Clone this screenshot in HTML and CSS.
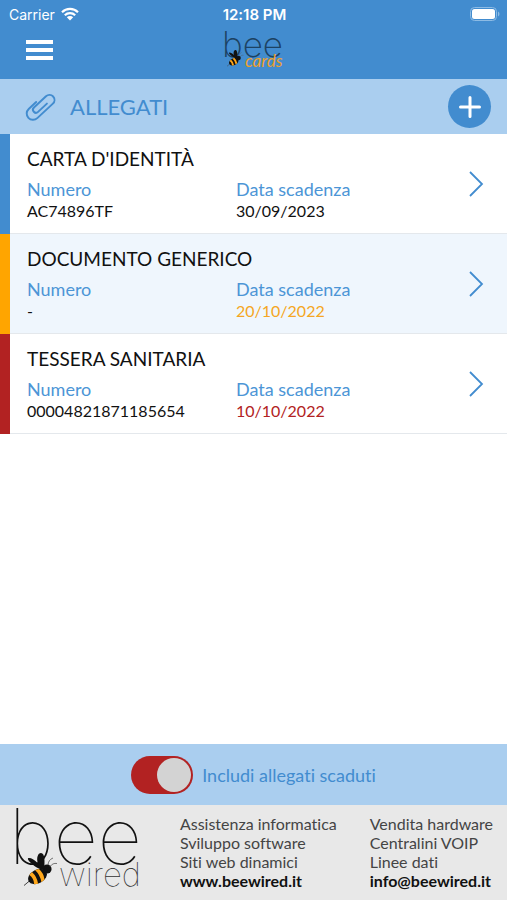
FILE: index.html
```html
<!DOCTYPE html>
<html lang="it">
<head>
  <meta charset="UTF-8">
  <meta name="viewport" content="width=device-width, initial-scale=1.0">
  <title>Bee Cards - Allegati</title>
  <link rel="stylesheet" href="styles.css">
</head>
<body>
  <svg class="symbols" aria-hidden="true">
    <symbol id="bee" viewBox="0 0 34 34">
      <path d="M0 32.500l6-5" stroke="#444" stroke-width="1"/>
      <g transform="translate(13.500 23.500) rotate(-28)">
        <ellipse rx="10" ry="6.800" fill="#111"/>
        <path d="M-6.500-5.200Q-4 0-6.500 5.200L-2.800 6.600Q-.5 0-2.800-6.600z" fill="#ffa71a"/>
        <path d="M.8-6.800Q3 0 .8 6.800L4.800 5.900Q7 0 4.800-5.900z" fill="#ffa71a"/>
      </g>
      <circle cx="23" cy="16" r="4.600" fill="#111"/>
      <path d="M20 17C13 16 6 10 4 6.500c-1-3 6-1 10 4C12 5 14 0 17 0c4 0 4 9 3 17z" fill="#111"/>
      <path d="M24 12c0-3 2-6 5-7M26 13.500c2-2.500 4-3.500 7-3" fill="none" stroke="#555" stroke-width=".8"/>
    </symbol>
    <symbol id="chevron" viewBox="0 0 16 26">
      <path d="M2 1L14 13 2 25" fill="none" stroke="#428ccf" stroke-width="1.800"/>
    </symbol>
  </svg>

  <div id="app">
    <header class="header">
      <div class="status-bar">
        <span class="carrier">Carrier
          <svg class="wifi" viewBox="0 0 18 14" aria-hidden="true">
            <path d="M1 5.200a11.500 11.500 0 0 1 16 0M3.800 8.200a7.500 7.500 0 0 1 10.400 0" fill="none" stroke="#fff" stroke-width="2.200"/>
            <path d="M5.800 10.300a4.600 4.600 0 0 1 6.400 0L9 13.600z" fill="#fff"/>
          </svg>
        </span>
        <strong class="clock">12:18 PM</strong>
        <svg class="battery" viewBox="0 0 30 14" aria-hidden="true">
          <rect x=".5" y=".5" width="26" height="13" rx="4" fill="none" stroke="#8dbbe4"/>
          <rect x="2" y="2" width="23" height="10" rx="2.500" fill="#fff"/>
          <path d="M28 4.500c2 1 2 4 0 5z" fill="#8dbbe4"/>
        </svg>
      </div>
      <div class="nav">
        <button class="menu-btn" aria-label="Menu"><span></span><span></span><span></span></button>
        <svg class="logo-cards" viewBox="0 0 64 42" role="img" aria-label="bee cards">
          <text x="0" y="27" class="logo-cards-bee">bee</text>
          <text x="23" y="37" class="logo-cards-name">cards</text>
          <use href="#bee" x="5" y="20" width="17" height="17"/>
        </svg>
      </div>
    </header>

    <div class="title-bar">
      <svg class="clip" viewBox="0 0 32 30" aria-hidden="true">
        <path transform="translate(15.500 15) rotate(-43) translate(-16.400 -6.500)" d="M17 0H6.500a6.500 6.500 0 0 0 0 13H28.500a5.200 5.200 0 0 0 0-10.400H11.500a3.100 3.100 0 0 0 0 6.200H24" fill="none" stroke="#428ccf" stroke-width="2" stroke-linecap="round"/>
      </svg>
      <h1>ALLEGATI</h1>
      <button class="add-btn" aria-label="Aggiungi">
        <svg viewBox="0 0 22 22" aria-hidden="true"><path d="M11 1.500v19M1.500 11h19" stroke="#fff" stroke-width="3" stroke-linecap="round"/></svg>
      </button>
    </div>

    <main>
      <ul class="documents">
        <li class="document valid">
          <h2>CARTA D'IDENTITÀ</h2>
          <dl>
            <div><dt>Numero</dt><dd>AC74896TF</dd></div>
            <div><dt>Data scadenza</dt><dd class="date">30/09/2023</dd></div>
          </dl>
          <button class="open-btn" aria-label="Apri carta d'identità"><svg><use href="#chevron"/></svg></button>
        </li>
        <li class="document expiring">
          <h2>DOCUMENTO GENERICO</h2>
          <dl>
            <div><dt>Numero</dt><dd>-</dd></div>
            <div><dt>Data scadenza</dt><dd class="date">20/10/2022</dd></div>
          </dl>
          <button class="open-btn" aria-label="Apri documento generico"><svg><use href="#chevron"/></svg></button>
        </li>
        <li class="document expired">
          <h2>TESSERA SANITARIA</h2>
          <dl>
            <div><dt>Numero</dt><dd>00004821871185654</dd></div>
            <div><dt>Data scadenza</dt><dd class="date">10/10/2022</dd></div>
          </dl>
          <button class="open-btn" aria-label="Apri tessera sanitaria"><svg><use href="#chevron"/></svg></button>
        </li>
      </ul>
    </main>

    <div class="filter-bar">
      <input type="checkbox" id="include-expired" class="toggle" checked>
      <label for="include-expired">Includi allegati scaduti</label>
    </div>

    <footer class="footer">
      <svg class="logo-wired" viewBox="0 0 134 90" role="img" aria-label="bee wired">
        <text x="-4" y="59" class="logo-wired-bee">bee</text>
        <text x="46" y="81" class="logo-wired-name">wired</text>
        <use href="#bee" x="11" y="48" width="34" height="34"/>
      </svg>
      <ul>
        <li>Assistenza informatica</li>
        <li>Sviluppo software</li>
        <li>Siti web dinamici</li>
        <li><a href="#">www.beewired.it</a></li>
      </ul>
      <ul>
        <li>Vendita hardware</li>
        <li>Centralini VOIP</li>
        <li>Linee dati</li>
        <li><a href="#">info@beewired.it</a></li>
      </ul>
    </footer>
  </div>
</body>
</html>
```

FILE: styles.css
```css
* {
    box-sizing: border-box;
}

body {
    margin: 0;
    font-family: Lato, "Liberation Sans", sans-serif;
    font-size: 18px;
    font-variant-ligatures: none;
    color: #111;
    background-color: #fff;
}

h1, h2, ul, dl, dd {
    margin: 0;
    padding: 0;
    font-weight: 400;
}

ul {
    list-style: none;
}

button {
    border: none;
    padding: 0;
    background: none;
    cursor: pointer;
}

.symbols {
    position: absolute;
    width: 0;
    height: 0;
}

#app {
    display: flex;
    flex-direction: column;
    min-height: 100vh;
}

/* header */
.header {
    background-color: #428ccf;
    color: #fff;
}

.status-bar {
    display: grid;
    grid-template-columns: 1fr auto 1fr;
    align-items: center;
    height: 28px;
    padding: 0 7px 0 9px;
    font-family: Inter, sans-serif;
    font-size: 14px;
}

.carrier {
    display: flex;
    align-items: center;
    gap: 6px;
}

.wifi {
    width: 18px;
    height: 14px;
}

.clock {
    font-size: 15px;
    font-weight: 600;
}

.battery {
    width: 30px;
    height: 14px;
    justify-self: end;
}

.nav {
    display: grid;
    grid-template-columns: 1fr auto 1fr;
    align-items: start;
    padding: 2px 26px 7px;
}

.menu-btn {
    display: flex;
    flex-direction: column;
    gap: 4px;
    width: 27px;
    margin-top: 10px;
}

.menu-btn span {
    width: 100%;
    height: 4px;
    background-color: #fff;
}

.logo-cards {
    width: 64px;
    height: 42px;
    overflow: visible;
}

.logo-cards-bee {
    font-family: Inter, sans-serif;
    font-size: 35px;
    font-weight: 200;
    fill: #1c4263;
}

.logo-cards-name {
    font-size: 17px;
    font-style: italic;
    font-weight: 400;
    fill: #eda02c;
}

/* title */
.title-bar {
    display: flex;
    align-items: center;
    gap: 14px;
    padding: 6px 16px 6px 25px;
    background-color: #aaceef;
    color: #428ccf;
}

.title-bar h1 {
    flex-grow: 1;
    font-size: 22px;
}

.clip {
    width: 31px;
    height: 30px;
    overflow: visible;
}

.add-btn {
    display: flex;
    align-items: center;
    justify-content: center;
    width: 43px;
    height: 43px;
    border-radius: 50%;
    background-color: #428ccf;
}

.add-btn svg {
    width: 22px;
    height: 22px;
}

/* documents */
main {
    flex-grow: 1;
}

.document {
    display: grid;
    grid-template-columns: 1fr auto;
    align-items: center;
    row-gap: 6px;
    padding: 12px 23px 12px 17px;
    border-left: 10px solid #428ccf;
    box-shadow: inset 0 -1px #e4e8ec;
}

.document:nth-child(even) {
    background-color: #eff6fd;
}

.document h2 {
    font-size: 19px;
    line-height: 26px;
}

.document dl {
    grid-row: 2;
    display: grid;
    grid-template-columns: 209px 1fr;
    line-height: 22px;
}

.document dt {
    font-size: 18px;
    color: #4c95d6;
}

.document dd {
    font-size: 16px;
}

.expiring {
    border-left-color: #ffa500;
}

.expiring .date {
    color: #f5a623;
}

.expired {
    border-left-color: #b22222;
}

.expired .date {
    color: #b22222;
}

.open-btn {
    grid-row: 1 / 3;
    grid-column: 2;
}

.open-btn svg {
    display: block;
    width: 16px;
    height: 26px;
}

/* filter */
.filter-bar {
    display: flex;
    align-items: center;
    justify-content: center;
    gap: 9px;
    padding: 12px 0 11px;
    background-color: #aaceef;
    color: #428ccf;
}

.toggle {
    appearance: none;
    display: flex;
    align-items: center;
    width: 62px;
    height: 38px;
    margin: 0;
    padding: 2px;
    border-radius: 19px;
    background-color: #999;
    cursor: pointer;
}

.toggle::before {
    content: "";
    width: 34px;
    height: 34px;
    border-radius: 50%;
    background-color: #d3d3d3;
}

.toggle:checked {
    justify-content: flex-end;
    background-color: #b22222;
}

/* footer */
.footer {
    display: flex;
    justify-content: space-between;
    padding: 0 14px 5px 13px;
    background-color: #e8e8e8;
    color: #444;
    font-size: 16px;
    line-height: 19px;
}

.footer ul {
    padding-top: 9px;
}

.footer a {
    color: #111;
    font-weight: 700;
    text-decoration: none;
}

.logo-wired {
    width: 134px;
    height: 90px;
    overflow: visible;
}

.logo-wired-bee {
    font-family: Inter, sans-serif;
    font-size: 77px;
    font-weight: 100;
    fill: #111;
}

.logo-wired-name {
    font-family: Inter, sans-serif;
    font-size: 33px;
    font-weight: 100;
    fill: #333;
}
```
